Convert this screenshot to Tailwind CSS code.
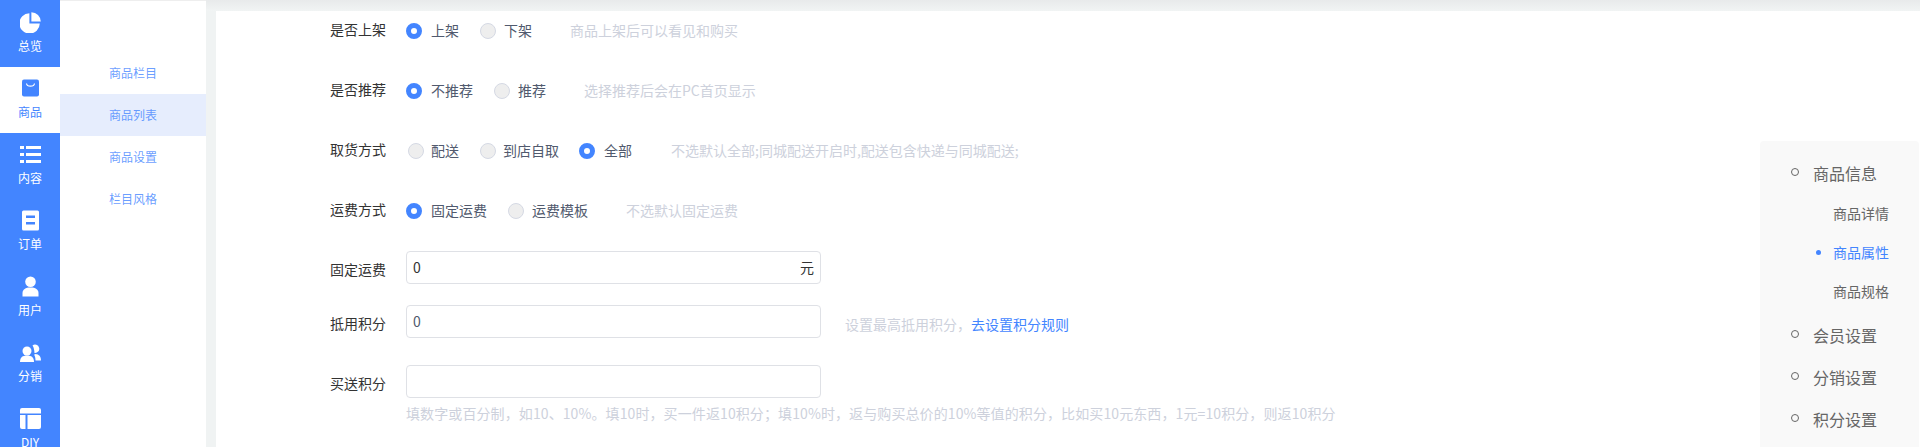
<!DOCTYPE html>
<html lang="zh-CN">
    <head>
        <meta charset="UTF-8" />
        <title>商品列表</title>
        <script src="https://cdn.jsdelivr.net/npm/@tailwindcss/browser@4"></script>
    </head>
    <body class="bg-white">
        <div class="relative flex h-[447px] w-[1920px] overflow-hidden font-['Noto_Sans_CJK_SC','Noto_Sans',sans-serif] text-sm text-[#515a6e]">
            <!-- Sidebar -->
            <nav class="w-[60px] shrink-0 bg-[#4385ff] pt-px text-xs text-white">
                <a class="flex h-[66px] flex-col items-center pt-[11px]">
                    <svg class="h-[21px] w-[21px]" viewBox="0 0 21 21" fill="#fff"><path d="M9.400 1.200v10.400h10.400A10.200 10.200 0 1 1 9.400 1.200z"/><path d="M11.400 0.200a9.600 9.600 0 0 1 9.400 9.400h-9.400z"/></svg>
                    <span class="mt-1 leading-[18px]">总览</span>
                </a>
                <a class="flex h-[66px] flex-col items-center bg-white pt-[11px] text-[#4385ff]">
                    <svg class="h-[21px] w-[21px]" viewBox="0 0 21 21"><rect x="2" y="1.500" width="17" height="17" rx="2" fill="#4385ff"/><path d="M6.500 5.500c.6 3.600 7.400 3.600 8 0" fill="none" stroke="#fff" stroke-width="1.200"/></svg>
                    <span class="mt-1 leading-[18px]">商品</span>
                </a>
                <a class="flex h-[66px] flex-col items-center pt-[11px]">
                    <svg class="h-[21px] w-[21px]" viewBox="0 0 21 21" fill="#fff"><rect x="0" y="2" width="4" height="3"/><rect x="6" y="2" width="15" height="3"/><rect x="0" y="9" width="4" height="3"/><rect x="6" y="9" width="15" height="3"/><rect x="0" y="16" width="4" height="3"/><rect x="6" y="16" width="15" height="3"/></svg>
                    <span class="mt-1 leading-[18px]">内容</span>
                </a>
                <a class="flex h-[66px] flex-col items-center pt-[11px]">
                    <svg class="h-[21px] w-[21px]" viewBox="0 0 21 21"><rect x="2" y="0.500" width="17" height="20" rx="1.500" fill="#fff"/><rect x="6" y="5.500" width="9" height="2.500" fill="#4385ff"/><rect x="6" y="12" width="9" height="2.500" fill="#4385ff"/></svg>
                    <span class="mt-1 leading-[18px]">订单</span>
                </a>
                <a class="flex h-[66px] flex-col items-center pt-[11px]">
                    <svg class="h-[21px] w-[21px]" viewBox="0 0 21 21" fill="#fff"><circle cx="10.500" cy="5.800" r="5.300"/><path d="M2.500 20.500v-3.500c0-3.500 3-5.500 8-5.500s8 2 8 5.500v3.500z"/></svg>
                    <span class="mt-1 leading-[18px]">用户</span>
                </a>
                <a class="flex h-[66px] flex-col items-center pt-[11px]">
                    <svg class="h-[21px] w-[21px]" viewBox="0 0 21 21" fill="#fff"><circle cx="7" cy="9" r="4.500"/><path d="M0 20c0-4.500 2.500-6.500 7-6.500s7 2 7 6.500z"/><path d="M12.500 3.500a4.200 4.200 0 1 1 2 7.500c-.3-3-.6-5.500-2-7.500z"/><path d="M15.500 12c3.500.3 5.500 2.500 5.500 6.500h-5.500c0-2.500-.4-4.500-1.500-5.800z"/></svg>
                    <span class="mt-1 leading-[18px]">分销</span>
                </a>
                <a class="flex h-[66px] flex-col items-center pt-[11px]">
                    <svg class="h-[21px] w-[21px]" viewBox="0 0 21 21" fill="#fff"><path d="M2 0h17a2 2 0 0 1 2 2v3.500H0V2a2 2 0 0 1 2-2z"/><path d="M0 7h5.500v14H2a2 2 0 0 1-2-2z"/><path d="M7.500 7H21v12a2 2 0 0 1-2 2H7.500z"/></svg>
                    <span class="mt-1 leading-[18px]">DIY</span>
                </a>
            </nav>

            <!-- Sub menu -->
            <div class="w-[146px] shrink-0 border-t border-[#eeeeee] bg-white pt-[51px] text-xs text-[#4385ff]/80">
                <a class="flex h-[42px] items-center justify-center">商品栏目</a>
                <a class="flex h-[42px] items-center justify-center bg-[#e6edfd]">商品列表</a>
                <a class="flex h-[42px] items-center justify-center">商品设置</a>
                <a class="flex h-[42px] items-center justify-center">栏目风格</a>
            </div>

            <!-- Main -->
            <div class="flex flex-1 flex-col bg-[#f0f3f3]">
                <div class="h-[11px] shrink-0 bg-linear-to-b from-[#e8eaeb] to-[#f1f4f4]"></div>
                <div class="ml-2.5 flex-1 bg-white pl-[114px] pt-[2px]">
                    <div class="flex h-[34px] items-center">
                        <label class="w-[76px] -translate-y-px text-[#333]">是否上架</label>
                        <div class="flex items-center gap-[21px]">
                            <span class="flex items-center gap-[9px]"><i class="h-4 w-4 translate-y-px rounded-full border-[5px] border-[#4385ff] bg-white"></i>上架</span>
                            <span class="flex items-center gap-2"><i class="h-4 w-4 translate-y-px rounded-full border border-[#d5d9e4] bg-[#eeeeee]"></i>下架</span>
                        </div>
                        <span class="ml-[38px] text-[#cdd1dc]">商品上架后可以看见和购买</span>
                    </div>
                    <div class="mt-[26px] flex h-[34px] items-center">
                        <label class="w-[76px] -translate-y-px text-[#333]">是否推荐</label>
                        <div class="flex items-center gap-[21px]">
                            <span class="flex items-center gap-[9px]"><i class="h-4 w-4 translate-y-px rounded-full border-[5px] border-[#4385ff] bg-white"></i>不推荐</span>
                            <span class="flex items-center gap-2"><i class="h-4 w-4 translate-y-px rounded-full border border-[#d5d9e4] bg-[#eeeeee]"></i>推荐</span>
                        </div>
                        <span class="ml-[38px] text-[#cdd1dc]">选择推荐后会在PC首页显示</span>
                    </div>
                    <div class="mt-[26px] flex h-[34px] items-center">
                        <label class="w-[76px] -translate-y-px text-[#333]">取货方式</label>
                        <div class="flex items-center gap-5">
                            <span class="ml-0.5 flex items-center gap-[7px]"><i class="h-4 w-4 translate-y-px rounded-full border border-[#d5d9e4] bg-[#eeeeee]"></i>配送</span>
                            <span class="ml-px flex items-center gap-[7px]"><i class="h-4 w-4 translate-y-px rounded-full border border-[#d5d9e4] bg-[#eeeeee]"></i>到店自取</span>
                            <span class="flex items-center gap-[9px]"><i class="h-4 w-4 translate-y-px rounded-full border-[5px] border-[#4385ff] bg-white"></i>全部</span>
                        </div>
                        <span class="ml-[39px] text-[#cdd1dc]">不选默认全部;同城配送开启时,配送包含快递与同城配送;</span>
                    </div>
                    <div class="mt-[26px] flex h-[34px] items-center">
                        <label class="w-[76px] -translate-y-px text-[#333]">运费方式</label>
                        <div class="flex items-center gap-[21px]">
                            <span class="flex items-center gap-[9px]"><i class="h-4 w-4 translate-y-px rounded-full border-[5px] border-[#4385ff] bg-white"></i>固定运费</span>
                            <span class="flex items-center gap-2"><i class="h-4 w-4 translate-y-px rounded-full border border-[#d5d9e4] bg-[#eeeeee]"></i>运费模板</span>
                        </div>
                        <span class="ml-[38px] text-[#cdd1dc]">不选默认固定运费</span>
                    </div>
                    <div class="mt-6 flex h-[33px] items-center">
                        <label class="w-[76px] translate-y-px text-[#333]">固定运费</label>
                        <div class="flex h-[33px] w-[415px] items-center justify-between rounded border border-[#dfe1e6] px-[6px] text-[#333]">
                            <span class="-translate-y-px">0</span><span class="-translate-y-px">元</span>
                        </div>
                    </div>
                    <div class="mt-[21px] flex h-[33px] items-center">
                        <label class="w-[76px] translate-y-px text-[#333]">抵用积分</label>
                        <div class="flex h-[33px] w-[415px] items-center rounded border border-[#dfe1e6] px-[6px]">
                            <span class="-translate-y-px">0</span>
                        </div>
                        <span class="ml-6 translate-y-0.5 text-[#cdd1dc]">设置最高抵用积分，<a class="text-[#4385ff]">去设置积分规则</a></span>
                    </div>
                    <div class="mt-[27px] flex h-[33px] items-center">
                        <label class="w-[76px] translate-y-px text-[#333]">买送积分</label>
                        <div class="h-[33px] w-[415px] rounded border border-[#dfe1e6]"></div>
                    </div>
                    <p class="ml-[76px] mt-[5px] leading-5 tracking-[0.1px] text-[#cdd1dc]">填数字或百分制，如10、10%。填10时，买一件返10积分；填10%时，返与购买总价的10%等值的积分，比如买10元东西，1元=10积分，则返10积分</p>
                </div>
            </div>

            <!-- Anchor panel -->
            <aside class="absolute left-[1760px] top-[141px] h-[306px] w-[159px] rounded-t bg-[#f9f9f9] pl-[31px] pt-5 text-[#666]">
                <div class="flex h-6 items-center text-base"><i class="mr-[14px] h-2 w-2 -translate-y-px rounded-full border border-[#666]"></i>商品信息</div>
                <div class="mt-4 flex h-6 items-center pl-[42px]">商品详情</div>
                <div class="relative mt-[15px] flex h-6 items-center pl-[42px] text-[#4385ff]"><i class="absolute left-[25px] h-[5px] w-[5px] rounded-full bg-[#4385ff]"></i>商品属性</div>
                <div class="mt-[15px] flex h-6 items-center pl-[42px]">商品规格</div>
                <div class="mt-5 flex h-6 items-center text-base"><i class="mr-[14px] h-2 w-2 -translate-y-px rounded-full border border-[#666]"></i>会员设置</div>
                <div class="mt-[18px] flex h-6 items-center text-base"><i class="mr-[14px] h-2 w-2 -translate-y-px rounded-full border border-[#666]"></i>分销设置</div>
                <div class="mt-[18px] flex h-6 items-center text-base"><i class="mr-[14px] h-2 w-2 -translate-y-px rounded-full border border-[#666]"></i>积分设置</div>
            </aside>
        </div>
    </body>
</html>
